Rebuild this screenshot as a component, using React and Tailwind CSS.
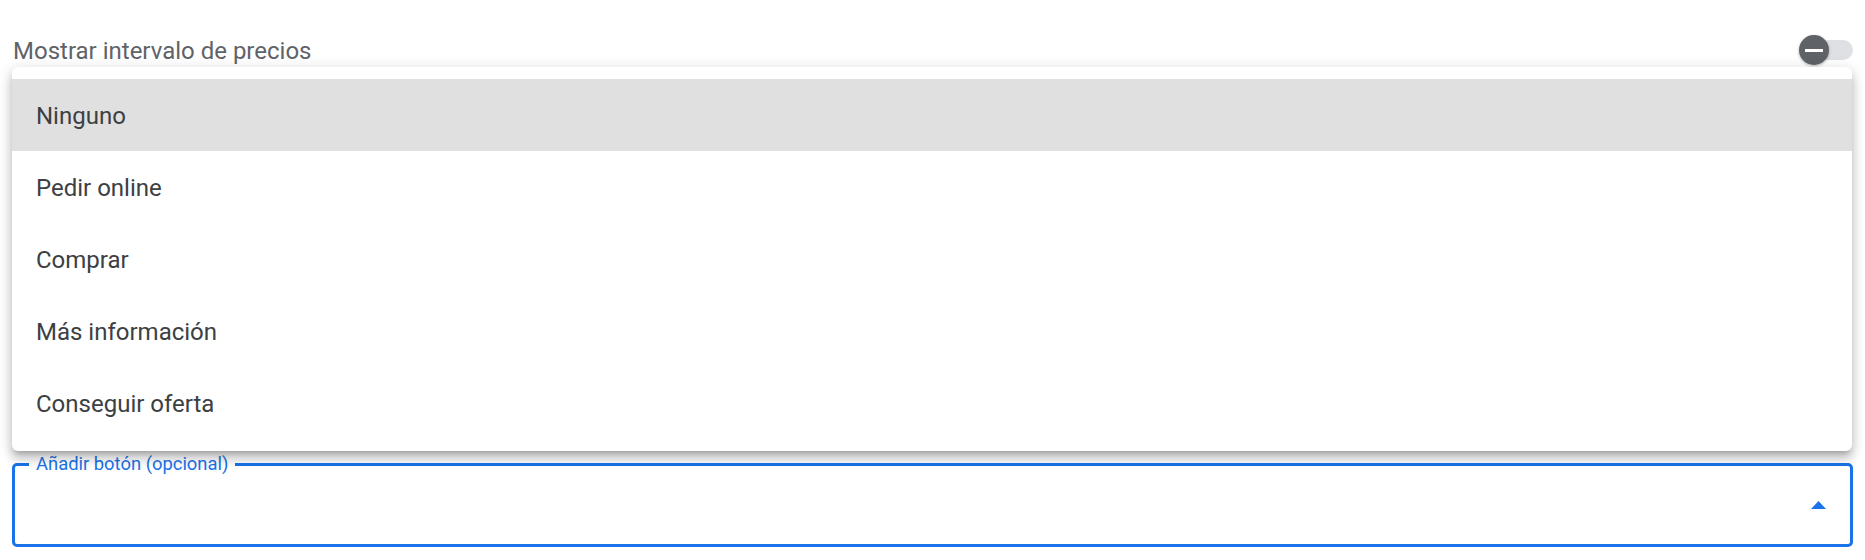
import React from "react";

const options = ["Ninguno", "Pedir online", "Comprar", "Más información", "Conseguir oferta"];

export default function App() {
  return (
    <div className="relative h-[560px] w-full overflow-hidden bg-white font-['Roboto',sans-serif]">
      {/* Price range toggle row */}
      <div className="flex items-center justify-between pl-[13px] pr-[12px] pt-[37px]">
        <span className="text-[24px] leading-[28px] text-[#5f6368]">Mostrar intervalo de precios</span>
        <div className="relative -mt-[2px] h-[20px] w-[36px] rounded-full bg-[#dfe0e4]">
          <div className="absolute left-[-18px] top-[-5px] flex h-[30px] w-[30px] items-center justify-center rounded-full bg-[#5f6368] shadow-[0_1px_3px_rgba(0,0,0,0.3)]">
            <div className="h-[3px] w-[18px] bg-white" />
          </div>
        </div>
      </div>

      {/* Button select field */}
      <div className="relative mx-[12px] mt-[398px] flex h-[84px] items-center justify-end rounded-[5px] border-[3px] border-[#1a73e8] pr-[24px]">
        <span className="absolute left-[14px] top-[-13px] bg-white px-[7px] text-[18.4px] leading-[22px] text-[#1a73e8]">
          Añadir botón (opcional)
        </span>
        <svg width="15" height="8" viewBox="0 0 15 8">
          <path d="M0 8 L7.5 0 L15 8 Z" fill="#1a73e8" />
        </svg>
      </div>

      {/* Open dropdown menu */}
      <div className="absolute left-[12px] right-[13px] top-[67px] rounded-[6px] bg-white py-[12px] shadow-[0_5px_5px_-3px_rgba(0,0,0,0.2),0_8px_10px_1px_rgba(0,0,0,0.14),0_3px_14px_2px_rgba(0,0,0,0.12)]">
        {options.map((o, i) => (
          <div
            key={o}
            className={
              "flex h-[72px] items-center pl-[24px] pt-[2px] text-[24px] text-[#3c4043] " +
              (i === 0 ? "bg-[#e0e0e0]" : "")
            }
          >
            {o}
          </div>
        ))}
      </div>
    </div>
  );
}
